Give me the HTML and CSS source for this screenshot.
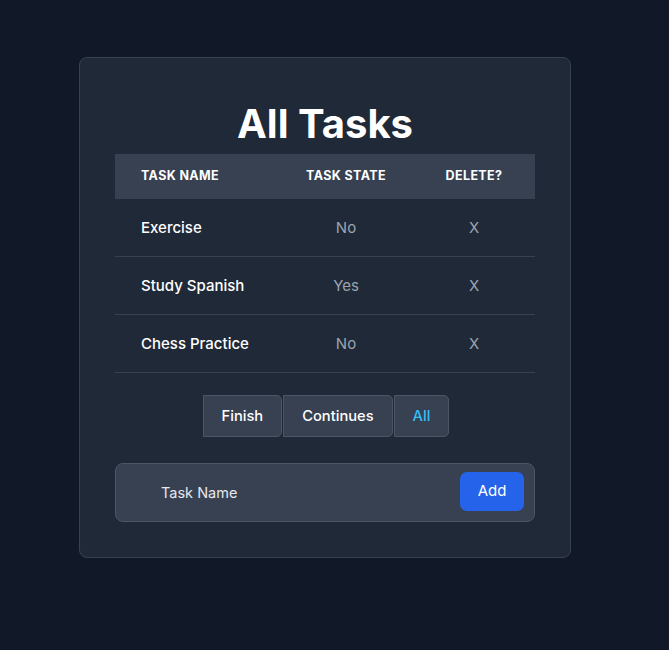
FILE: index.html
```html
<!DOCTYPE html>
<html>
<head>
<meta charset="utf-8">
<link rel="stylesheet" href="styles.css">
</head>
<body>
<div class="card">
  <h1 class="title">All Tasks</h1>
  <div class="table">
    <div class="row head">
      <div class="c1">Task Name</div>
      <div class="c2">Task State</div>
      <div class="c3">Delete?</div>
    </div>
    <div class="row">
      <div class="c1 name">Exercise</div>
      <div class="c2 muted">No</div>
      <div class="c3 muted">X</div>
    </div>
    <div class="row">
      <div class="c1 name">Study Spanish</div>
      <div class="c2 muted">Yes</div>
      <div class="c3 muted">X</div>
    </div>
    <div class="row">
      <div class="c1 name">Chess Practice</div>
      <div class="c2 muted">No</div>
      <div class="c3 muted">X</div>
    </div>
  </div>
  <div class="filters">
    <button class="fbtn">Finish</button>
    <button class="fbtn">Continues</button>
    <button class="fbtn active">All</button>
  </div>
  <form class="addform">
    <input class="field" type="text" placeholder="Task Name">
    <button class="add" type="button">Add</button>
  </form>
</div>
</body>
</html>
```

FILE: styles.css
```css
* { box-sizing: border-box; }
html, body { margin: 0; padding: 0; }
body {
  background: #111827;
  font-family: Inter, "Noto Sans", sans-serif;
  color: #ffffff;
  min-height: 650px;
  padding-top: 57px;
  padding-left: 79px;
}
.card {
  width: 492px;
  height: 501px;
  background: #1f2937;
  border: 1px solid #374151;
  border-radius: 8px;
  padding: 35px;
  display: flex;
  flex-direction: column;
}
.title {
  margin: 0;
  font-size: 40px;
  line-height: 61px;
  font-weight: 700;
  text-align: center;
  color: #ffffff;
}
.table { display: flex; flex-direction: column; }
.row {
  display: grid;
  grid-template-columns: 164px 134px 122px;
  align-items: center;
  height: 58px;
  padding-bottom: 1px;
  border-bottom: 1px solid #374151;
  font-size: 15px;
}
.row.head {
  height: 45px;
  background: #374151;
  font-size: 12.5px;
  font-weight: 700;
  text-transform: uppercase;
  letter-spacing: 0.03em;
}
.c1 { padding-left: 26px; }
.c2, .c3 { text-align: center; }
.name { font-weight: 500; color: #ffffff; }
.muted { color: #9ca3af; }
.filters {
  display: flex;
  justify-content: center;
  gap: 1px;
  margin-top: 22px;
  padding-left: 2px;
}
.fbtn {
  font-family: inherit;
  font-size: 14.7px;
  font-weight: 500;
  color: #ffffff;
  background: #374151;
  border: 1px solid #4b5563;
  border-radius: 0 5px 5px 0;
  height: 42px;
  padding: 0 18px;
}
.fbtn.active { color: #38bdf8; }
.addform {
  margin-top: 26px;
  height: 59px;
  background: #374151;
  border: 1px solid #4b5563;
  border-radius: 8px;
  display: flex;
  align-items: flex-start;
  padding: 8px 10px 0 45px;
}
.field {
  flex: 1;
  align-self: center;
  background: transparent;
  border: none;
  outline: none;
  font-family: inherit;
  font-size: 14.5px;
  color: #ffffff;
  padding: 0;
  margin-top: -9px;
}
.field::placeholder { color: #e5e7eb; }
.add {
  font-family: inherit;
  font-size: 15px;
  font-weight: 400;
  color: #ffffff;
  background: #2563eb;
  border: none;
  border-radius: 7px;
  width: 64px;
  height: 39px;
  padding: 0 0 3px 0;
}
```
